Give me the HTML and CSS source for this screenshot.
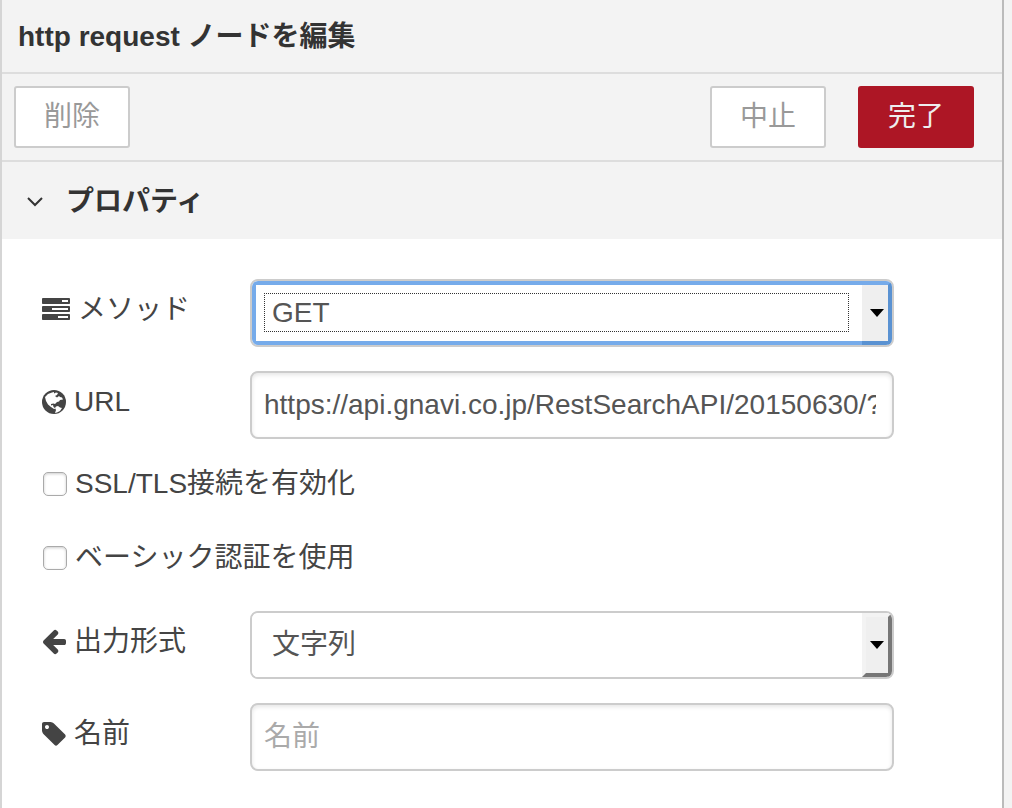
FILE: index.html
```html
<!DOCTYPE html>
<html lang="ja">
<head>
  <meta charset="UTF-8" />
  <meta name="viewport" content="width=device-width, initial-scale=1.0"/>
  <title>http request ノードを編集</title>
  <link rel="stylesheet" href="styles.css">
</head>

<body>
  <main class="tray">
    <!-- Title -->
    <header class="tray-header">
      <h1>http request ノードを編集</h1>
    </header>

    <!-- Buttons -->
    <div class="tray-toolbar">
      <button type="button" class="btn">削除</button>
      <div class="toolbar-right">
        <button type="button" class="btn">中止</button>
        <button type="button" class="btn primary">完了</button>
      </div>
    </div>

    <!-- Properties section -->
    <h2 class="section-header">
      <svg class="chevron" viewBox="0 0 18 18" aria-hidden="true"><path d="M2 5l7 7 7-7" fill="none" stroke="currentColor" stroke-width="2"/></svg>
      <span>プロパティ</span>
    </h2>

    <form class="node-form">
      <div class="form-row">
        <label for="method">
          <svg class="icon wide" viewBox="0 0 1792 1792" aria-hidden="true"><path d="M1024 1408h640v-128h-640v128zm-384-512h1024v-128h-1024v128zm640-512h384v-128h-384v128zm512 832v256q0 26-19 45t-45 19h-1664q-26 0-45-19t-19-45v-256q0-26 19-45t45-19h1664q26 0 45 19t19 45zm0-512v256q0 26-19 45t-45 19h-1664q-26 0-45-19t-19-45v-256q0-26 19-45t45-19h1664q26 0 45 19t19 45zm0-512v256q0 26-19 45t-45 19h-1664q-26 0-45-19t-19-45v-256q0-26 19-45t45-19h1664q26 0 45 19t19 45z"/></svg>
          メソッド
        </label>
        <div class="select-box focused">
          <select id="method">
            <option>GET</option>
            <option>POST</option>
            <option>PUT</option>
            <option>DELETE</option>
          </select>
          <svg class="caret" viewBox="0 0 14 8" aria-hidden="true"><path d="M0 0h14L7 8z"/></svg>
        </div>
      </div>

      <div class="form-row">
        <label for="url">
          <svg class="icon" viewBox="0 0 24 24" aria-hidden="true">
            <circle cx="12" cy="12" r="12"/>
            <path class="land" d="M3 7l3-3 4-1.500 2-.5 0 1.500 2-1 2 .5-1 2-2 1 2 1.500 2-1.500 1 1 2 .5 1 2-3 .5-1 1.500-2 .5-2 2-1.500-.5-2.500.5v1.500l2-.5.5 2 2 1.500-1.500.5-3-2-3-2.500-2-3.500z"/>
            <path class="land" d="M14 16.500l2-.5 2 1.500 2 .5-2 3-3 1.500-2 .5 1-3-1-2z"/>
          </svg>
          URL
        </label>
        <input type="text" id="url" class="text-box" value="https://api.gnavi.co.jp/RestSearchAPI/20150630/?keyid=">
      </div>

      <div class="form-row check-row">
        <input type="checkbox" id="tls">
        <label for="tls">SSL/TLS接続を有効化</label>
      </div>

      <div class="form-row check-row">
        <input type="checkbox" id="auth">
        <label for="auth">ベーシック認証を使用</label>
      </div>

      <div class="form-row">
        <label for="ret">
          <svg class="icon" viewBox="128 192 1536 1536" aria-hidden="true"><path d="M1664 896v128q0 53-32.500 90.500t-84.500 37.500h-704l293 294q38 36 38 90t-38 90l-75 76q-37 37-90 37-52 0-91-37l-651-652q-37-37-37-90 0-52 37-91l651-650q38-38 91-38 52 0 90 38l75 74q38 38 38 91t-38 91l-293 293h704q52 0 84.500 37.500t32.500 90.500z"/></svg>
          出力形式
        </label>
        <div class="select-box">
          <select id="ret">
            <option>文字列</option>
            <option>バイナリバッファ</option>
            <option>JSONオブジェクト</option>
          </select>
          <svg class="caret" viewBox="0 0 14 8" aria-hidden="true"><path d="M0 0h14L7 8z"/></svg>
        </div>
      </div>

      <div class="form-row">
        <label for="name">
          <svg class="icon" viewBox="128 128 1536 1536" aria-hidden="true"><path d="M576 448q0-53-37.500-90.500t-90.500-37.500-90.500 37.500-37.500 90.500 37.500 90.500 90.500 37.500 90.500-37.500 37.500-90.500zm1067 576q0 53-37 90l-491 492q-39 37-91 37-53 0-90-37l-715-716q-38-37-64.500-101t-26.500-117v-416q0-52 38-90t90-38h416q53 0 117 26.500t102 64.500l715 714q37 39 37 91z"/></svg>
          名前
        </label>
        <input type="text" id="name" class="text-box" placeholder="名前">
      </div>
    </form>
  </main>
</body>
</html>
```
FILE: styles.css
```css
*,
*::before,
*::after {
  box-sizing: border-box;
}

body {
  margin: 0;
  padding-right: 8px;
  min-height: 100vh;
  display: flex;
  background-color: #f3f3f3;
  color: #444;
  font-family: "Liberation Sans", "Noto Sans CJK JP", sans-serif;
  font-size: 28px;
  line-height: 42px;
}

.tray {
  flex: 1;
  min-width: 0;
  border-left: 2px solid #d5d5d5;
  border-right: 2px solid #bbb;
  background-color: #fff;
}

.tray-header,
.tray-toolbar,
.section-header {
  background-color: #f3f3f3;
  color: #333;
}

.tray-header {
  padding: 16px 16px 14px;
  border-bottom: 2px solid #ddd;
}

h1,
h2 {
  margin: 0;
  font-size: 28px;
  font-weight: bold;
}

.tray-toolbar {
  display: flex;
  justify-content: space-between;
  padding: 12px 28px 12px 12px;
  border-bottom: 2px solid #ddd;
}

.toolbar-right {
  display: flex;
  gap: 32px;
}

.btn {
  width: 116px;
  height: 62px;
  padding: 0;
  border: 2px solid #ccc;
  border-radius: 3px;
  background-color: #fff;
  color: #999;
  font: inherit;
  cursor: pointer;
}

.btn.primary {
  border-color: #ad1625;
  background-color: #ad1625;
  color: #eee;
}

.section-header {
  display: flex;
  align-items: center;
  gap: 22px;
  padding: 19px 24px 16px;
}

.chevron {
  width: 18px;
  height: 18px;
}

.node-form {
  padding: 40px;
}

.form-row {
  display: flex;
  align-items: center;
  margin-bottom: 24px;
}

.form-row label {
  display: flex;
  align-items: center;
  gap: 8px;
  padding-bottom: 6px;
  width: 208px;
}

.icon {
  width: 24px;
  height: 24px;
  fill: currentColor;
  overflow: visible;
}

.icon.wide {
  width: 28px;
  height: 28px;
}

.land {
  fill: #fff;
}

/* Text boxes and drop-downs */
.text-box,
.select-box {
  width: 70%;
  height: 68px;
  border: 2px solid #ccc;
  border-radius: 8px;
  background-color: #fff;
}

.text-box {
  padding: 0 16px 0 12px;
  box-shadow: inset 0 2px 4px rgba(0, 0, 0, 0.1);
  color: #555;
  font: inherit;
}

.text-box::placeholder {
  color: #aaa;
}

.select-box {
  position: relative;
  display: flex;
  overflow: hidden;
}

.select-box select {
  flex: 1;
  padding: 0 40px 0 16px;
  border: 4px solid transparent;
  border-radius: 0;
  outline: none;
  appearance: none;
  background-color: #fff;
  color: #555;
  font: inherit;
}

.select-box::after {
  content: "";
  position: absolute;
  top: 0;
  right: 0;
  bottom: 0;
  width: 30px;
  border: 4px solid;
  border-color: #f3f3f3 #777 #777 #f3f3f3;
  background-color: #efefef;
  pointer-events: none;
}

.caret {
  position: absolute;
  z-index: 1;
  top: 28px;
  right: 8px;
  width: 14px;
  height: 8px;
  fill: #000;
  pointer-events: none;
}

.focused select {
  border-color: #76abea;
}

.select-box.focused::after {
  border-color: #76abea #5a92d2 #5a92d2;
  border-left-width: 0;
}

.focused::before {
  content: "";
  position: absolute;
  top: 12px;
  right: 43px;
  bottom: 13px;
  left: 12px;
  border: 1px dotted #333;
  pointer-events: none;
}

/* Tick boxes */
.check-row {
  align-items: flex-start;
  gap: 8px;
}

.check-row input {
  width: 24px;
  height: 24px;
  margin: 9px 0 0 1px;
  border: 1px solid #aaa;
  border-radius: 5px;
  appearance: none;
  background-color: #fff;
  box-shadow: inset 0 1px 3px rgba(0, 0, 0, 0.2);
}

.form-row.check-row label {
  padding-bottom: 8px;
  width: auto;
}
```
